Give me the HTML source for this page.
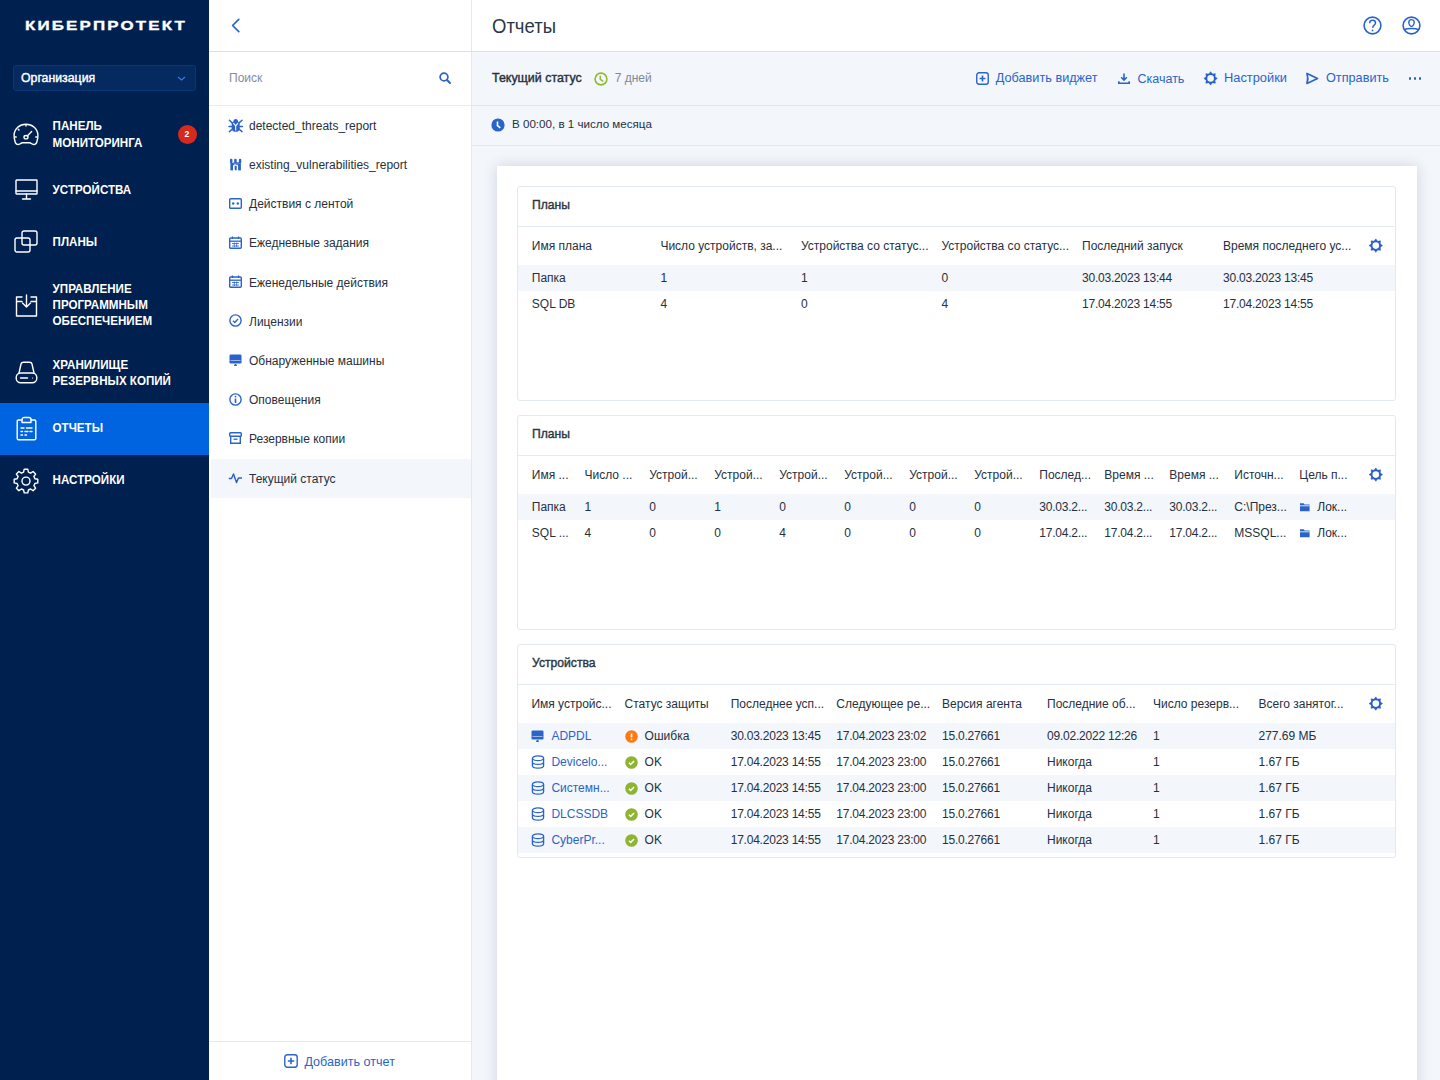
<!DOCTYPE html>
<html><head><meta charset="utf-8"><title>Отчеты</title>
<style>
html,body{margin:0;padding:0;}
body{width:1440px;height:1080px;overflow:hidden;position:relative;background:#F3F6FB;font-family:"Liberation Sans",sans-serif;}
.t{position:absolute;white-space:nowrap;line-height:1;}
svg{overflow:visible}
</style></head><body>

<div style="position:absolute;left:0px;top:0px;width:209px;height:1080px;background:#00204F"></div>
<div class="t" style="left:25px;top:19px;font-size:13px;font-weight:700;color:#fff;letter-spacing:1.66px;-webkit-text-stroke:0.35px #fff;transform-origin:0 0;transform:scaleX(1.3);">КИБЕРПРОТЕКТ</div>
<div style="position:absolute;left:13px;top:65px;width:183px;height:26px;box-sizing:border-box;background:#042A60;border:1px solid #0A3673;border-radius:3px"></div>
<div class="t" style="left:21px;top:72.19px;font-size:12.3px;font-weight:400;color:#FFFFFF;-webkit-text-stroke:0.4px #fff;transform-origin:0 10.41px;transform:scaleY(1.08);">Организация</div>
<svg style="position:absolute;left:177px;top:76px" width="9" height="6" viewBox="0 0 9 6"><path d="M1 1 L4.5 4 L8 1" fill="none" stroke="#3B78DA" stroke-width="1.3"/></svg>
<div style="position:absolute;left:0px;top:403px;width:209px;height:52px;background:#0064E0"></div>
<div class="t" style="left:52.6px;top:119.98px;font-size:11.6px;font-weight:700;color:#FFFFFF;transform-origin:0 9.82px;transform:scaleY(1.14);">ПАНЕЛЬ</div>
<div class="t" style="left:52.6px;top:137.08px;font-size:11.6px;font-weight:700;color:#FFFFFF;transform-origin:0 9.82px;transform:scaleY(1.14);">МОНИТОРИНГА</div>
<div class="t" style="left:52.6px;top:183.68px;font-size:11.6px;font-weight:700;color:#FFFFFF;transform-origin:0 9.82px;transform:scaleY(1.14);">УСТРОЙСТВА</div>
<div class="t" style="left:52.6px;top:236.38px;font-size:11.6px;font-weight:700;color:#FFFFFF;transform-origin:0 9.82px;transform:scaleY(1.14);">ПЛАНЫ</div>
<div class="t" style="left:52.6px;top:283.18px;font-size:11.6px;font-weight:700;color:#FFFFFF;transform-origin:0 9.82px;transform:scaleY(1.14);">УПРАВЛЕНИЕ</div>
<div class="t" style="left:52.6px;top:299.28px;font-size:11.6px;font-weight:700;color:#FFFFFF;transform-origin:0 9.82px;transform:scaleY(1.14);">ПРОГРАММНЫМ</div>
<div class="t" style="left:52.6px;top:315.38px;font-size:11.6px;font-weight:700;color:#FFFFFF;transform-origin:0 9.82px;transform:scaleY(1.14);">ОБЕСПЕЧЕНИЕМ</div>
<div class="t" style="left:52.6px;top:359.08px;font-size:11.6px;font-weight:700;color:#FFFFFF;transform-origin:0 9.82px;transform:scaleY(1.14);">ХРАНИЛИЩЕ</div>
<div class="t" style="left:52.6px;top:374.58px;font-size:11.6px;font-weight:700;color:#FFFFFF;transform-origin:0 9.82px;transform:scaleY(1.14);">РЕЗЕРВНЫХ КОПИЙ</div>
<div class="t" style="left:52.6px;top:421.68px;font-size:11.6px;font-weight:700;color:#FFFFFF;transform-origin:0 9.82px;transform:scaleY(1.14);">ОТЧЕТЫ</div>
<div class="t" style="left:52.6px;top:474.08px;font-size:11.6px;font-weight:700;color:#FFFFFF;transform-origin:0 9.82px;transform:scaleY(1.14);">НАСТРОЙКИ</div>
<svg style="position:absolute;left:13px;top:123px" width="26" height="23" viewBox="0 0 26 23"><path d="M5.5 21.5 C3.2 21.5 2.2 20 1.9 17.8 C1.2 15.8 1 13.8 1.1 12 C1.4 5.6 6.6 1.3 13 1.3 C19.4 1.3 24.6 5.6 24.9 12 C25 13.8 24.8 15.8 24.1 17.8 C23.8 20 22.8 21.5 20.5 21.5 C18.6 21.5 18.1 19.7 16.6 19.7 H9.4 C7.9 19.7 7.4 21.5 5.5 21.5 Z" fill="none" stroke="#FFFFFF" stroke-width="1.4" stroke-linecap="round" stroke-linejoin="round" stroke-width="1.7"/><path d="M13 1.8 V3 M2.2 14 H3.2 M23.8 14 H22.8 M5.2 6.2 L6 7" fill="none" stroke="#FFFFFF" stroke-width="1.4" stroke-linecap="round" stroke-linejoin="round" stroke-width="1.7"/><ellipse cx="13" cy="14.2" rx="2" ry="1.7" fill="none" stroke="#FFFFFF" stroke-width="1.4" stroke-linecap="round" stroke-linejoin="round" stroke-width="1.7"/><path d="M14.3 12.9 L18.6 8.6" fill="none" stroke="#FFFFFF" stroke-width="1.4" stroke-linecap="round" stroke-linejoin="round" stroke-width="1.6"/></svg>
<svg style="position:absolute;left:15px;top:179px" width="23" height="22" viewBox="0 0 23 22"><rect x="1" y="1" width="21" height="14" rx="0.5" fill="none" stroke="#FFFFFF" stroke-width="1.4" stroke-linecap="round" stroke-linejoin="round"/><path d="M1 12 H22 M11.5 15 V19.5 M7.5 20 H15.5" fill="none" stroke="#FFFFFF" stroke-width="1.4" stroke-linecap="round" stroke-linejoin="round"/></svg>
<svg style="position:absolute;left:14px;top:230px" width="24" height="24" viewBox="0 0 24 24"><rect x="8" y="1" width="15" height="14" rx="2" fill="none" stroke="#FFFFFF" stroke-width="1.4" stroke-linecap="round" stroke-linejoin="round" stroke="#D8DDE6"/><rect x="1" y="8" width="15" height="14" rx="2" fill="none" stroke="#FFFFFF" stroke-width="1.4" stroke-linecap="round" stroke-linejoin="round" stroke="#D8DDE6"/></svg>
<svg style="position:absolute;left:15px;top:294px" width="23" height="23" viewBox="0 0 23 23"><path d="M7 3 H1.5 V22 H21.5 V3 H16 M1.5 7.5 H7 M16 7.5 H21.5" fill="none" stroke="#FFFFFF" stroke-width="1.4" stroke-linecap="round" stroke-linejoin="round"/><path d="M11.5 1 V13 M7.5 9 L11.5 13 L15.5 9" fill="none" stroke="#FFFFFF" stroke-width="1.4" stroke-linecap="round" stroke-linejoin="round"/></svg>
<svg style="position:absolute;left:15px;top:361px" width="23" height="23" viewBox="0 0 23 23"><path d="M4 12 L6 3 C6.3 1.8 7 1.2 8.5 1.2 H14.5 C16 1.2 16.7 1.8 17 3 L19 12" fill="none" stroke="#FFFFFF" stroke-width="1.4" stroke-linecap="round" stroke-linejoin="round"/><rect x="1.2" y="12" width="20.6" height="9.8" rx="4.5" fill="none" stroke="#FFFFFF" stroke-width="1.4" stroke-linecap="round" stroke-linejoin="round"/><path d="M5.5 17 H12.5" fill="none" stroke="#FFFFFF" stroke-width="1.4" stroke-linecap="round" stroke-linejoin="round"/><circle cx="17.5" cy="17" r="0.6" fill="#fff"/></svg>
<svg style="position:absolute;left:16px;top:416px" width="21" height="25" viewBox="0 0 21 25"><path d="M6 4 H2.5 C1.7 4 1.2 4.5 1.2 5.3 V22.5 C1.2 23.3 1.7 23.8 2.5 23.8 H18.5 C19.3 23.8 19.8 23.3 19.8 22.5 V5.3 C19.8 4.5 19.3 4 18.5 4 H15" fill="none" stroke="#FFFFFF" stroke-width="1.4" stroke-linecap="round" stroke-linejoin="round"/><path d="M6 6.5 V3.5 C6 2.5 7 1.5 8 1.5 H13 C14 1.5 15 2.5 15 3.5 V6.5 Z" fill="none" stroke="#FFFFFF" stroke-width="1.4" stroke-linecap="round" stroke-linejoin="round"/><path d="M5 12 H8 M10.5 12 H16 M5 15.5 H6.5 M9 15.5 H12 M14 15.5 H16 M5 19 H6.5 M9 19 H10.5" fill="none" stroke="#FFFFFF" stroke-width="1.4" stroke-linecap="round" stroke-linejoin="round"/></svg>
<svg style="position:absolute;left:14px;top:468px" width="24" height="26" viewBox="0 0 24 26"><path d="M10.2 1.2 H13.8 L14.4 4.2 L16.6 5.2 L19.1 3.5 L21.6 6 L19.9 8.5 L20.9 10.7 L23.8 11.3 V14.9 L20.9 15.5 L19.9 17.7 L21.6 20.2 L19.1 22.7 L16.6 21 L14.4 22 L13.8 24.9 H10.2 L9.6 22 L7.4 21 L4.9 22.7 L2.4 20.2 L4.1 17.7 L3.1 15.5 L0.2 14.9 V11.3 L3.1 10.7 L4.1 8.5 L2.4 6 L4.9 3.5 L7.4 5.2 L9.6 4.2 Z" fill="none" stroke="#FFFFFF" stroke-width="1.4" stroke-linecap="round" stroke-linejoin="round"/><circle cx="12" cy="13.1" r="4" fill="none" stroke="#FFFFFF" stroke-width="1.4" stroke-linecap="round" stroke-linejoin="round"/></svg>
<div style="position:absolute;left:177.5px;top:124.5px;width:19px;height:19px;border-radius:50%;background:#D8291F;color:#fff;font-size:8.6px;font-weight:700;line-height:19px;text-align:center">2</div>
<div style="position:absolute;left:209px;top:0px;width:262px;height:1080px;background:#FFFFFF"></div>
<div style="position:absolute;left:471px;top:0px;width:1px;height:1080px;background:#E2E9F6"></div>
<div style="position:absolute;left:209px;top:51px;width:1231px;height:1px;background:#D6E0F2"></div>
<svg style="position:absolute;left:231px;top:18px" width="9" height="15" viewBox="0 0 9 15"><path d="M7.8 1.3 L1.6 7.5 L7.8 13.7" fill="none" stroke="#2B64C8" stroke-width="1.7" stroke-linecap="round" stroke-linejoin="round"/></svg>
<div class="t" style="left:229px;top:71.74px;font-size:12px;font-weight:400;color:#838C9C;">Поиск</div>
<svg style="position:absolute;left:439px;top:72px" width="13" height="14" viewBox="0 0 13 14"><circle cx="5" cy="5" r="3.9" fill="none" stroke="#2B64C8" stroke-width="1.7"/><path d="M8 8 L11 11" stroke="#2B64C8" stroke-width="1.9" stroke-linecap="round"/></svg>
<div style="position:absolute;left:209px;top:105px;width:262px;height:1px;background:#E6ECF7"></div>
<div style="position:absolute;left:211px;top:459px;width:260px;height:39px;background:#F3F6FB"></div>
<div class="t" style="left:249px;top:119.84px;font-size:12px;font-weight:400;color:#26303E;">detected_threats_report</div>
<div class="t" style="left:249px;top:159.03px;font-size:12px;font-weight:400;color:#26303E;">existing_vulnerabilities_report</div>
<div class="t" style="left:249px;top:198.22px;font-size:12px;font-weight:400;color:#26303E;">Действия с лентой</div>
<div class="t" style="left:249px;top:237.41px;font-size:12px;font-weight:400;color:#26303E;">Ежедневные задания</div>
<div class="t" style="left:249px;top:276.60px;font-size:12px;font-weight:400;color:#26303E;">Еженедельные действия</div>
<div class="t" style="left:249px;top:315.79px;font-size:12px;font-weight:400;color:#26303E;">Лицензии</div>
<div class="t" style="left:249px;top:354.98px;font-size:12px;font-weight:400;color:#26303E;">Обнаруженные машины</div>
<div class="t" style="left:249px;top:394.17px;font-size:12px;font-weight:400;color:#26303E;">Оповещения</div>
<div class="t" style="left:249px;top:433.36px;font-size:12px;font-weight:400;color:#26303E;">Резервные копии</div>
<div class="t" style="left:249px;top:472.55px;font-size:12px;font-weight:400;color:#26303E;">Текущий статус</div>
<svg style="position:absolute;left:226px;top:116px" width="20" height="20" viewBox="0 0 20 20"><path d="M7 7.5 C7 4.6 8.3 3.1 9.7 3.1 C11.1 3.1 12.4 4.6 12.4 7.5 Z" fill="#2B64C8"/><path d="M5.7 6.6 H13.7 V12.4 C13.7 14.5 12 15.8 9.7 15.8 C7.4 15.8 5.7 14.5 5.7 12.4 Z" fill="#2B64C8"/><path d="M7.4 7.2 L9.7 9.8 L12 7.2 M9.7 9.8 V14.6" fill="none" stroke="#fff" stroke-width="1.1"/><path d="M3.4 4.3 L6.3 6.9 M16 4.3 L13.1 6.9 M3 10.4 H5.9 M16.4 10.4 H13.5 M3.4 15.6 L6.2 13.2 M16 15.6 L13.2 13.2" stroke="#2B64C8" stroke-width="1.5" stroke-linecap="round"/></svg>
<svg style="position:absolute;left:226px;top:155px" width="20" height="20" viewBox="0 0 20 20"><rect x="4" y="3.7" width="2.4" height="4.6" rx="1.1" fill="#2B64C8"/><rect x="8.2" y="3.7" width="2.5" height="4.6" rx="1.1" fill="#2B64C8"/><rect x="12.9" y="3.7" width="2.4" height="4.6" rx="1.1" fill="#2B64C8"/><path d="M4.6 7.2 H14.8 V9.2 C13.5 9.2 12.6 9.6 12.4 10.5 V15.2 H14.6 V8.5 M4.6 7.2 V15.2 H6.9 V10.5 C7.2 9.5 8.3 8.9 9.7 8.9 C11.1 8.9 12.2 9.5 12.4 10.5" fill="#2B64C8"/><path d="M4.6 8.3 H14.8 V15.2 H12.3 V11 C12.3 9.8 11.2 9 9.7 9 C8.2 9 7 9.8 7 11 V15.2 H4.6 Z" fill="#2B64C8"/><rect x="8.7" y="10.8" width="2" height="4.4" fill="#2B64C8"/></svg>
<svg style="position:absolute;left:229px;top:198px" width="13" height="11" viewBox="0 0 13 11"><rect x="0.7" y="0.7" width="11.6" height="9.6" rx="1" fill="none" stroke="#2B64C8" stroke-width="1.4"/><circle cx="4.2" cy="5.5" r="1.2" fill="#2B64C8"/><circle cx="8.8" cy="5.5" r="1.2" fill="#2B64C8"/></svg>
<svg style="position:absolute;left:229px;top:236px" width="13" height="13" viewBox="0 0 13 13"><rect x="0.7" y="2" width="11.6" height="10.3" rx="1" fill="none" stroke="#2B64C8" stroke-width="1.4"/><path d="M0.7 5.2 H12.3" stroke="#2B64C8" stroke-width="1.3"/><path d="M3.5 0.5 V3 M9.5 0.5 V3" stroke="#2B64C8" stroke-width="1.3"/><path d="M3 7.5 H10 M3 10 H10 M5.3 6.5 V11 M7.7 6.5 V11" stroke="#2B64C8" stroke-width="0.8"/></svg>
<svg style="position:absolute;left:229px;top:275px" width="13" height="13" viewBox="0 0 13 13"><rect x="0.7" y="2" width="11.6" height="10.3" rx="1" fill="none" stroke="#2B64C8" stroke-width="1.4"/><path d="M0.7 5.2 H12.3" stroke="#2B64C8" stroke-width="1.3"/><path d="M3.5 0.5 V3 M9.5 0.5 V3" stroke="#2B64C8" stroke-width="1.3"/><path d="M3 7.5 H10 M3 10 H10 M5.3 6.5 V11 M7.7 6.5 V11" stroke="#2B64C8" stroke-width="0.8"/></svg>
<svg style="position:absolute;left:229px;top:314px" width="13" height="13" viewBox="0 0 13 13"><circle cx="6.5" cy="6.5" r="5.6" fill="none" stroke="#2B64C8" stroke-width="1.4"/><path d="M4 6.7 L5.8 8.4 L9 5" fill="none" stroke="#2B64C8" stroke-width="1.4"/></svg>
<svg style="position:absolute;left:229px;top:354px" width="13" height="13" viewBox="0 0 13 13"><rect x="0.5" y="0.5" width="12" height="9" rx="1.3" fill="#2B64C8"/><path d="M1.5 6.5 H11.5" stroke="#9DB5E6" stroke-width="1"/><path d="M5 12 H8 L7.3 10 H5.7 Z" fill="#2B64C8"/></svg>
<svg style="position:absolute;left:229px;top:393px" width="13" height="13" viewBox="0 0 13 13"><circle cx="6.5" cy="6.5" r="5.6" fill="none" stroke="#2B64C8" stroke-width="1.4"/><path d="M6.5 5.5 V10" stroke="#2B64C8" stroke-width="1.6"/><circle cx="6.5" cy="3.6" r="0.9" fill="#2B64C8"/></svg>
<svg style="position:absolute;left:229px;top:432px" width="13" height="12" viewBox="0 0 13 12"><rect x="0.7" y="0.7" width="11.6" height="3.5" rx="0.8" fill="none" stroke="#2B64C8" stroke-width="1.4"/><path d="M1.7 4.2 V11.3 H11.3 V4.2" fill="none" stroke="#2B64C8" stroke-width="1.4"/><path d="M4.5 7.2 H8.5" stroke="#2B64C8" stroke-width="1.3"/></svg>
<svg style="position:absolute;left:228px;top:472px" width="15" height="12" viewBox="0 0 15 12"><path d="M0.8 6.5 H3.5 L5.5 2 L8.5 10.5 L10.5 6 H14" fill="none" stroke="#2B64C8" stroke-width="1.5" stroke-linejoin="round"/></svg>
<div style="position:absolute;left:209px;top:1041px;width:262px;height:1px;background:#E2E9F4"></div>
<svg style="position:absolute;left:284px;top:1054px" width="14" height="14" viewBox="0 0 14 14"><rect x="0.8" y="0.8" width="12.4" height="12.4" rx="2.5" fill="none" stroke="#2B64C8" stroke-width="1.4"/><path d="M7 3.8 V10.2 M3.8 7 H10.2" stroke="#2B64C8" stroke-width="1.6"/></svg>
<div class="t" style="left:304.4px;top:1056.23px;font-size:12.6px;font-weight:400;color:#2B64C8;">Добавить отчет</div>
<div style="position:absolute;left:472px;top:0px;width:968px;height:51px;background:#FFFFFF"></div>
<div class="t" style="left:492px;top:18.24px;font-size:18.5px;font-weight:400;color:#2B3748;transform-origin:0 15.66px;transform:scaleY(1.07);">Отчеты</div>
<svg style="position:absolute;left:1363px;top:16px" width="19" height="19" viewBox="0 0 19 19"><circle cx="9.5" cy="9.5" r="8.4" fill="none" stroke="#2B64C8" stroke-width="1.6"/><path d="M6.6 7.2 C6.6 5.3 8 4.3 9.6 4.3 C11.3 4.3 12.5 5.4 12.5 6.9 C12.5 8.8 10 9.3 9.6 11.8" fill="none" stroke="#2B64C8" stroke-width="1.5"/><circle cx="9.5" cy="14.4" r="0.9" fill="#2B64C8"/></svg>
<svg style="position:absolute;left:1402px;top:16px" width="19" height="19" viewBox="0 0 19 19"><circle cx="9.5" cy="9.5" r="8.4" fill="none" stroke="#2B64C8" stroke-width="1.6"/><path d="M9.5 3.6 C7.8 3.6 6.8 4.8 6.8 6.4 C6.8 8.3 8.3 10.4 9.5 10.4 C10.7 10.4 12.2 8.3 12.2 6.4 C12.2 4.8 11.2 3.6 9.5 3.6 Z" fill="none" stroke="#2B64C8" stroke-width="1.4"/><path d="M2.5 13.6 C5 12.2 14 12.2 16.5 13.6" fill="none" stroke="#2B64C8" stroke-width="1.6"/></svg>
<div class="t" style="left:492px;top:72.26px;font-size:12.45px;font-weight:400;color:#26303E;-webkit-text-stroke:0.4px #26303E;">Текущий статус</div>
<svg style="position:absolute;left:594px;top:72px" width="14" height="14" viewBox="0 0 14 14"><circle cx="7" cy="7" r="5.9" fill="none" stroke="#93B833" stroke-width="1.6"/><path d="M6.3 3.8 V7.3 L9.3 9.5" fill="none" stroke="#93B833" stroke-width="1.5"/></svg>
<div class="t" style="left:614.7px;top:72.14px;font-size:12px;font-weight:400;color:#7F8898;">7 дней</div>
<svg style="position:absolute;left:976px;top:72px" width="13" height="13" viewBox="0 0 13 13"><rect x="0.75" y="0.75" width="11.5" height="11.5" rx="2.3" fill="none" stroke="#2B64C8" stroke-width="1.4"/><path d="M6.5 3.6 V9.4 M3.6 6.5 H9.4" stroke="#2B64C8" stroke-width="1.6"/></svg>
<div class="t" style="left:995.8px;top:72.35px;font-size:12.7px;font-weight:400;color:#2B64C8;">Добавить виджет</div>
<svg style="position:absolute;left:1118px;top:73px" width="12" height="11" viewBox="0 0 12 11"><path d="M6 0.5 V7 M3.2 4.3 L6 7.2 L8.8 4.3" fill="none" stroke="#2B64C8" stroke-width="1.6"/><path d="M0.8 8.3 V10.2 H11.2 V8.3" fill="none" stroke="#2B64C8" stroke-width="1.6"/></svg>
<div class="t" style="left:1137.5px;top:72.52px;font-size:12.5px;font-weight:400;color:#2B64C8;">Скачать</div>
<svg style="position:absolute;left:0;top:0" width="1440" height="1080" viewBox="0 0 1440 1080" class="ov"><polygon points="1210.60,71.70 1212.36,74.15 1215.34,73.66 1214.85,76.64 1217.30,78.40 1214.85,80.16 1215.34,83.14 1212.36,82.65 1210.60,85.10 1208.84,82.65 1205.86,83.14 1206.35,80.16 1203.90,78.40 1206.35,76.64 1205.86,73.66 1208.84,74.15" fill="#2A5FC6" stroke="#2A5FC6" stroke-width="0.6" stroke-linejoin="round"/><circle cx="1210.6" cy="78.4" r="4.9" fill="#2A5FC6"/><circle cx="1210.6" cy="78.4" r="3.3" fill="#F3F6FB"/></svg>
<div class="t" style="left:1224px;top:72.22px;font-size:12.85px;font-weight:400;color:#2B64C8;">Настройки</div>
<svg style="position:absolute;left:1305px;top:72px" width="14" height="13" viewBox="0 0 14 13"><path d="M2 1.4 L12.5 6.4 L2 11.4 Q3.6 6.4 2 1.4 Z" fill="none" stroke="#2B64C8" stroke-width="1.7" stroke-linejoin="round"/></svg>
<div class="t" style="left:1326px;top:72.35px;font-size:12.7px;font-weight:400;color:#2B64C8;">Отправить</div>
<div style="position:absolute;left:1408.7px;top:77.3px;width:2.6px;height:2.6px;border-radius:50%;background:#2B64C8"></div>
<div style="position:absolute;left:1413.7px;top:77.3px;width:2.6px;height:2.6px;border-radius:50%;background:#2B64C8"></div>
<div style="position:absolute;left:1418.7px;top:77.3px;width:2.6px;height:2.6px;border-radius:50%;background:#2B64C8"></div>
<div style="position:absolute;left:472px;top:105px;width:968px;height:1px;background:#DFE6F3"></div>
<svg style="position:absolute;left:491px;top:118px" width="14" height="14" viewBox="0 0 14 14"><circle cx="7" cy="7" r="6.6" fill="#2B64C8"/><path d="M6.5 3.5 V7.5 L9.3 9.8" fill="none" stroke="#fff" stroke-width="1.6"/></svg>
<div class="t" style="left:512px;top:117.68px;font-size:11.6px;font-weight:400;color:#26303E;">В 00:00, в 1 число месяца</div>
<div style="position:absolute;left:472px;top:145px;width:968px;height:1px;background:#E1E8F4"></div>
<div style="position:absolute;left:497px;top:166px;width:920px;height:960px;background:#fff;box-shadow:0 0 13px rgba(30,40,70,0.17)"></div>
<div style="position:absolute;left:517px;top:186px;width:879px;height:215px;box-sizing:border-box;border:1px solid #E2E9F4;border-radius:3px;background:#fff"></div>
<div class="t" style="left:532px;top:199.42px;font-size:12.15px;font-weight:400;color:#2C3644;-webkit-text-stroke:0.4px #2C3644;transform-origin:0 10.28px;transform:scaleY(1.08);">Планы</div>
<div style="position:absolute;left:518px;top:226px;width:877px;height:1px;background:#E2E9F4"></div>
<div class="t" style="left:531.8px;top:239.94px;font-size:12px;font-weight:400;color:#26303E;">Имя плана</div>
<div class="t" style="left:660.4px;top:239.94px;font-size:12px;font-weight:400;color:#26303E;">Число устройств, за...</div>
<div class="t" style="left:801px;top:239.94px;font-size:12px;font-weight:400;color:#26303E;">Устройства со статус...</div>
<div class="t" style="left:941.5px;top:239.94px;font-size:12px;font-weight:400;color:#26303E;">Устройства со статус...</div>
<div class="t" style="left:1082px;top:239.94px;font-size:12px;font-weight:400;color:#26303E;">Последний запуск</div>
<div class="t" style="left:1223px;top:239.94px;font-size:12px;font-weight:400;color:#26303E;">Время последнего ус...</div>
<svg style="position:absolute;left:0;top:0" width="1440" height="1080" viewBox="0 0 1440 1080" class="ov"><polygon points="1375.80,238.90 1377.56,241.35 1380.54,240.86 1380.05,243.84 1382.50,245.60 1380.05,247.36 1380.54,250.34 1377.56,249.85 1375.80,252.30 1374.04,249.85 1371.06,250.34 1371.55,247.36 1369.10,245.60 1371.55,243.84 1371.06,240.86 1374.04,241.35" fill="#2A5FC6" stroke="#2A5FC6" stroke-width="0.6" stroke-linejoin="round"/><circle cx="1375.8" cy="245.6" r="4.9" fill="#2A5FC6"/><circle cx="1375.8" cy="245.6" r="3.3" fill="#FFFFFF"/></svg>
<div style="position:absolute;left:518px;top:265px;width:877px;height:26px;background:#F3F6FB"></div>
<div class="t" style="left:531.8px;top:272.24px;font-size:12px;font-weight:400;color:#26303E;">Папка</div>
<div class="t" style="left:660.4px;top:272.24px;font-size:12px;font-weight:400;color:#26303E;">1</div>
<div class="t" style="left:801px;top:272.24px;font-size:12px;font-weight:400;color:#26303E;">1</div>
<div class="t" style="left:941.5px;top:272.24px;font-size:12px;font-weight:400;color:#26303E;">0</div>
<div class="t" style="left:1082px;top:272.24px;font-size:12px;font-weight:400;color:#26303E;letter-spacing:-0.22px;">30.03.2023 13:44</div>
<div class="t" style="left:1223px;top:272.24px;font-size:12px;font-weight:400;color:#26303E;letter-spacing:-0.22px;">30.03.2023 13:45</div>
<div class="t" style="left:531.8px;top:298.24px;font-size:12px;font-weight:400;color:#26303E;">SQL DB</div>
<div class="t" style="left:660.4px;top:298.24px;font-size:12px;font-weight:400;color:#26303E;">4</div>
<div class="t" style="left:801px;top:298.24px;font-size:12px;font-weight:400;color:#26303E;">0</div>
<div class="t" style="left:941.5px;top:298.24px;font-size:12px;font-weight:400;color:#26303E;">4</div>
<div class="t" style="left:1082px;top:298.24px;font-size:12px;font-weight:400;color:#26303E;letter-spacing:-0.22px;">17.04.2023 14:55</div>
<div class="t" style="left:1223px;top:298.24px;font-size:12px;font-weight:400;color:#26303E;letter-spacing:-0.22px;">17.04.2023 14:55</div>
<div style="position:absolute;left:517px;top:415px;width:879px;height:215px;box-sizing:border-box;border:1px solid #E2E9F4;border-radius:3px;background:#fff"></div>
<div class="t" style="left:532px;top:428.42px;font-size:12.15px;font-weight:400;color:#2C3644;-webkit-text-stroke:0.4px #2C3644;transform-origin:0 10.28px;transform:scaleY(1.08);">Планы</div>
<div style="position:absolute;left:518px;top:455px;width:877px;height:1px;background:#E2E9F4"></div>
<div class="t" style="left:531.8px;top:468.94px;font-size:12px;font-weight:400;color:#26303E;">Имя ...</div>
<div class="t" style="left:584.5px;top:468.94px;font-size:12px;font-weight:400;color:#26303E;">Число ...</div>
<div class="t" style="left:649.3px;top:468.94px;font-size:12px;font-weight:400;color:#26303E;">Устрой...</div>
<div class="t" style="left:714.3px;top:468.94px;font-size:12px;font-weight:400;color:#26303E;">Устрой...</div>
<div class="t" style="left:779.3px;top:468.94px;font-size:12px;font-weight:400;color:#26303E;">Устрой...</div>
<div class="t" style="left:844.3px;top:468.94px;font-size:12px;font-weight:400;color:#26303E;">Устрой...</div>
<div class="t" style="left:909.3px;top:468.94px;font-size:12px;font-weight:400;color:#26303E;">Устрой...</div>
<div class="t" style="left:974.3px;top:468.94px;font-size:12px;font-weight:400;color:#26303E;">Устрой...</div>
<div class="t" style="left:1039.3px;top:468.94px;font-size:12px;font-weight:400;color:#26303E;">Послед...</div>
<div class="t" style="left:1104.3px;top:468.94px;font-size:12px;font-weight:400;color:#26303E;">Время ...</div>
<div class="t" style="left:1169.3px;top:468.94px;font-size:12px;font-weight:400;color:#26303E;">Время ...</div>
<div class="t" style="left:1234.3px;top:468.94px;font-size:12px;font-weight:400;color:#26303E;">Источн...</div>
<div class="t" style="left:1299.3px;top:468.94px;font-size:12px;font-weight:400;color:#26303E;">Цель п...</div>
<svg style="position:absolute;left:0;top:0" width="1440" height="1080" viewBox="0 0 1440 1080" class="ov"><polygon points="1375.80,467.90 1377.56,470.35 1380.54,469.86 1380.05,472.84 1382.50,474.60 1380.05,476.36 1380.54,479.34 1377.56,478.85 1375.80,481.30 1374.04,478.85 1371.06,479.34 1371.55,476.36 1369.10,474.60 1371.55,472.84 1371.06,469.86 1374.04,470.35" fill="#2A5FC6" stroke="#2A5FC6" stroke-width="0.6" stroke-linejoin="round"/><circle cx="1375.8" cy="474.6" r="4.9" fill="#2A5FC6"/><circle cx="1375.8" cy="474.6" r="3.3" fill="#FFFFFF"/></svg>
<div style="position:absolute;left:518px;top:494px;width:877px;height:26px;background:#F3F6FB"></div>
<div class="t" style="left:531.8px;top:501.24px;font-size:12px;font-weight:400;color:#26303E;">Папка</div>
<div class="t" style="left:584.5px;top:501.24px;font-size:12px;font-weight:400;color:#26303E;">1</div>
<div class="t" style="left:649.3px;top:501.24px;font-size:12px;font-weight:400;color:#26303E;">0</div>
<div class="t" style="left:714.3px;top:501.24px;font-size:12px;font-weight:400;color:#26303E;">1</div>
<div class="t" style="left:779.3px;top:501.24px;font-size:12px;font-weight:400;color:#26303E;">0</div>
<div class="t" style="left:844.3px;top:501.24px;font-size:12px;font-weight:400;color:#26303E;">0</div>
<div class="t" style="left:909.3px;top:501.24px;font-size:12px;font-weight:400;color:#26303E;">0</div>
<div class="t" style="left:974.3px;top:501.24px;font-size:12px;font-weight:400;color:#26303E;">0</div>
<div class="t" style="left:1039.3px;top:501.24px;font-size:12px;font-weight:400;color:#26303E;letter-spacing:-0.22px;">30.03.2...</div>
<div class="t" style="left:1104.3px;top:501.24px;font-size:12px;font-weight:400;color:#26303E;letter-spacing:-0.22px;">30.03.2...</div>
<div class="t" style="left:1169.3px;top:501.24px;font-size:12px;font-weight:400;color:#26303E;letter-spacing:-0.22px;">30.03.2...</div>
<div class="t" style="left:1234.3px;top:501.24px;font-size:12px;font-weight:400;color:#26303E;">C:\През...</div>
<svg style="position:absolute;left:1300.0px;top:503px" width="10" height="9" viewBox="0 0 10 9"><path d="M0 0.3 H3.6 L4.6 1.5 H9.6 V8.3 H0 Z" fill="#2B64C8"/><path d="M0 2.8 H9.6" stroke="#fff" stroke-width="0.8"/></svg>
<div class="t" style="left:1317.3px;top:501.24px;font-size:12px;font-weight:400;color:#26303E;">Лок...</div>
<div class="t" style="left:531.8px;top:527.24px;font-size:12px;font-weight:400;color:#26303E;">SQL ...</div>
<div class="t" style="left:584.5px;top:527.24px;font-size:12px;font-weight:400;color:#26303E;">4</div>
<div class="t" style="left:649.3px;top:527.24px;font-size:12px;font-weight:400;color:#26303E;">0</div>
<div class="t" style="left:714.3px;top:527.24px;font-size:12px;font-weight:400;color:#26303E;">0</div>
<div class="t" style="left:779.3px;top:527.24px;font-size:12px;font-weight:400;color:#26303E;">4</div>
<div class="t" style="left:844.3px;top:527.24px;font-size:12px;font-weight:400;color:#26303E;">0</div>
<div class="t" style="left:909.3px;top:527.24px;font-size:12px;font-weight:400;color:#26303E;">0</div>
<div class="t" style="left:974.3px;top:527.24px;font-size:12px;font-weight:400;color:#26303E;">0</div>
<div class="t" style="left:1039.3px;top:527.24px;font-size:12px;font-weight:400;color:#26303E;letter-spacing:-0.22px;">17.04.2...</div>
<div class="t" style="left:1104.3px;top:527.24px;font-size:12px;font-weight:400;color:#26303E;letter-spacing:-0.22px;">17.04.2...</div>
<div class="t" style="left:1169.3px;top:527.24px;font-size:12px;font-weight:400;color:#26303E;letter-spacing:-0.22px;">17.04.2...</div>
<div class="t" style="left:1234.3px;top:527.24px;font-size:12px;font-weight:400;color:#26303E;">MSSQL...</div>
<svg style="position:absolute;left:1300.0px;top:529px" width="10" height="9" viewBox="0 0 10 9"><path d="M0 0.3 H3.6 L4.6 1.5 H9.6 V8.3 H0 Z" fill="#2B64C8"/><path d="M0 2.8 H9.6" stroke="#fff" stroke-width="0.8"/></svg>
<div class="t" style="left:1317.3px;top:527.24px;font-size:12px;font-weight:400;color:#26303E;">Лок...</div>
<div style="position:absolute;left:517px;top:644px;width:879px;height:214px;box-sizing:border-box;border:1px solid #E2E9F4;border-radius:3px;background:#fff"></div>
<div class="t" style="left:532px;top:657.42px;font-size:12.15px;font-weight:400;color:#2C3644;-webkit-text-stroke:0.4px #2C3644;transform-origin:0 10.28px;transform:scaleY(1.08);">Устройства</div>
<div style="position:absolute;left:518px;top:684px;width:877px;height:1px;background:#E2E9F4"></div>
<div class="t" style="left:531.4px;top:697.94px;font-size:12px;font-weight:400;color:#26303E;">Имя устройс...</div>
<div class="t" style="left:624.6px;top:697.94px;font-size:12px;font-weight:400;color:#26303E;">Статус защиты</div>
<div class="t" style="left:730.7px;top:697.94px;font-size:12px;font-weight:400;color:#26303E;">Последнее усп...</div>
<div class="t" style="left:836.3px;top:697.94px;font-size:12px;font-weight:400;color:#26303E;">Следующее ре...</div>
<div class="t" style="left:942px;top:697.94px;font-size:12px;font-weight:400;color:#26303E;">Версия агента</div>
<div class="t" style="left:1047px;top:697.94px;font-size:12px;font-weight:400;color:#26303E;">Последние об...</div>
<div class="t" style="left:1153px;top:697.94px;font-size:12px;font-weight:400;color:#26303E;">Число резерв...</div>
<div class="t" style="left:1258.5px;top:697.94px;font-size:12px;font-weight:400;color:#26303E;">Всего занятог...</div>
<svg style="position:absolute;left:0;top:0" width="1440" height="1080" viewBox="0 0 1440 1080" class="ov"><polygon points="1375.80,696.90 1377.56,699.35 1380.54,698.86 1380.05,701.84 1382.50,703.60 1380.05,705.36 1380.54,708.34 1377.56,707.85 1375.80,710.30 1374.04,707.85 1371.06,708.34 1371.55,705.36 1369.10,703.60 1371.55,701.84 1371.06,698.86 1374.04,699.35" fill="#2A5FC6" stroke="#2A5FC6" stroke-width="0.6" stroke-linejoin="round"/><circle cx="1375.8" cy="703.6" r="4.9" fill="#2A5FC6"/><circle cx="1375.8" cy="703.6" r="3.3" fill="#FFFFFF"/></svg>
<div style="position:absolute;left:518px;top:723px;width:877px;height:26px;background:#F3F6FB"></div>
<svg style="position:absolute;left:531.4px;top:730px" width="13" height="13" viewBox="0 0 13 13"><rect x="0.5" y="0.5" width="12" height="9" rx="1.3" fill="#2B64C8"/><path d="M1.5 6.5 H11.5" stroke="#9DB5E6" stroke-width="1"/><path d="M5 12 H8 L7.3 10 H5.7 Z" fill="#2B64C8"/></svg>
<div class="t" style="left:551.4px;top:730.24px;font-size:12px;font-weight:400;color:#2B64C8;">ADPDL</div>
<svg style="position:absolute;left:624.6px;top:729.6px" width="13" height="13" viewBox="0 0 13 13"><circle cx="6.5" cy="6.5" r="6.3" fill="#FF7A12"/><path d="M6.5 3.6 V7.3" stroke="#fff" stroke-width="1.6"/><circle cx="6.5" cy="9.4" r="0.85" fill="#fff"/></svg>
<div class="t" style="left:644.6px;top:730.24px;font-size:12px;font-weight:400;color:#26303E;">Ошибка</div>
<div class="t" style="left:730.7px;top:730.24px;font-size:12px;font-weight:400;color:#26303E;letter-spacing:-0.22px;">30.03.2023 13:45</div>
<div class="t" style="left:836.3px;top:730.24px;font-size:12px;font-weight:400;color:#26303E;letter-spacing:-0.22px;">17.04.2023 23:02</div>
<div class="t" style="left:942px;top:730.24px;font-size:12px;font-weight:400;color:#26303E;letter-spacing:-0.22px;">15.0.27661</div>
<div class="t" style="left:1047px;top:730.24px;font-size:12px;font-weight:400;color:#26303E;letter-spacing:-0.22px;">09.02.2022 12:26</div>
<div class="t" style="left:1153px;top:730.24px;font-size:12px;font-weight:400;color:#26303E;">1</div>
<div class="t" style="left:1258.5px;top:730.24px;font-size:12px;font-weight:400;color:#26303E;">277.69 МБ</div>
<svg style="position:absolute;left:531.4px;top:755px" width="14" height="14" viewBox="0 0 14 14"><ellipse cx="7" cy="3.3" rx="5.6" ry="2.4" fill="none" stroke="#2B64C8" stroke-width="1.3"/><path d="M1.4 3.3 V10.7 C1.4 12 4 13.1 7 13.1 C10 13.1 12.6 12 12.6 10.7 V3.3 M1.4 7 C1.4 8.3 4 9.4 7 9.4 C10 9.4 12.6 8.3 12.6 7" fill="none" stroke="#2B64C8" stroke-width="1.3"/></svg>
<div class="t" style="left:551.4px;top:756.24px;font-size:12px;font-weight:400;color:#2B64C8;">Devicelo...</div>
<svg style="position:absolute;left:624.6px;top:755.6px" width="13" height="13" viewBox="0 0 13 13"><circle cx="6.5" cy="6.5" r="6.3" fill="#8DB52F"/><path d="M3.9 6.7 L5.7 8.4 L9.1 5" fill="none" stroke="#fff" stroke-width="1.5"/></svg>
<div class="t" style="left:644.6px;top:756.24px;font-size:12px;font-weight:400;color:#26303E;">OK</div>
<div class="t" style="left:730.7px;top:756.24px;font-size:12px;font-weight:400;color:#26303E;letter-spacing:-0.22px;">17.04.2023 14:55</div>
<div class="t" style="left:836.3px;top:756.24px;font-size:12px;font-weight:400;color:#26303E;letter-spacing:-0.22px;">17.04.2023 23:00</div>
<div class="t" style="left:942px;top:756.24px;font-size:12px;font-weight:400;color:#26303E;letter-spacing:-0.22px;">15.0.27661</div>
<div class="t" style="left:1047px;top:756.24px;font-size:12px;font-weight:400;color:#26303E;">Никогда</div>
<div class="t" style="left:1153px;top:756.24px;font-size:12px;font-weight:400;color:#26303E;">1</div>
<div class="t" style="left:1258.5px;top:756.24px;font-size:12px;font-weight:400;color:#26303E;">1.67 ГБ</div>
<div style="position:absolute;left:518px;top:775px;width:877px;height:26px;background:#F3F6FB"></div>
<svg style="position:absolute;left:531.4px;top:781px" width="14" height="14" viewBox="0 0 14 14"><ellipse cx="7" cy="3.3" rx="5.6" ry="2.4" fill="none" stroke="#2B64C8" stroke-width="1.3"/><path d="M1.4 3.3 V10.7 C1.4 12 4 13.1 7 13.1 C10 13.1 12.6 12 12.6 10.7 V3.3 M1.4 7 C1.4 8.3 4 9.4 7 9.4 C10 9.4 12.6 8.3 12.6 7" fill="none" stroke="#2B64C8" stroke-width="1.3"/></svg>
<div class="t" style="left:551.4px;top:782.24px;font-size:12px;font-weight:400;color:#2B64C8;">Системн...</div>
<svg style="position:absolute;left:624.6px;top:781.6px" width="13" height="13" viewBox="0 0 13 13"><circle cx="6.5" cy="6.5" r="6.3" fill="#8DB52F"/><path d="M3.9 6.7 L5.7 8.4 L9.1 5" fill="none" stroke="#fff" stroke-width="1.5"/></svg>
<div class="t" style="left:644.6px;top:782.24px;font-size:12px;font-weight:400;color:#26303E;">OK</div>
<div class="t" style="left:730.7px;top:782.24px;font-size:12px;font-weight:400;color:#26303E;letter-spacing:-0.22px;">17.04.2023 14:55</div>
<div class="t" style="left:836.3px;top:782.24px;font-size:12px;font-weight:400;color:#26303E;letter-spacing:-0.22px;">17.04.2023 23:00</div>
<div class="t" style="left:942px;top:782.24px;font-size:12px;font-weight:400;color:#26303E;letter-spacing:-0.22px;">15.0.27661</div>
<div class="t" style="left:1047px;top:782.24px;font-size:12px;font-weight:400;color:#26303E;">Никогда</div>
<div class="t" style="left:1153px;top:782.24px;font-size:12px;font-weight:400;color:#26303E;">1</div>
<div class="t" style="left:1258.5px;top:782.24px;font-size:12px;font-weight:400;color:#26303E;">1.67 ГБ</div>
<svg style="position:absolute;left:531.4px;top:807px" width="14" height="14" viewBox="0 0 14 14"><ellipse cx="7" cy="3.3" rx="5.6" ry="2.4" fill="none" stroke="#2B64C8" stroke-width="1.3"/><path d="M1.4 3.3 V10.7 C1.4 12 4 13.1 7 13.1 C10 13.1 12.6 12 12.6 10.7 V3.3 M1.4 7 C1.4 8.3 4 9.4 7 9.4 C10 9.4 12.6 8.3 12.6 7" fill="none" stroke="#2B64C8" stroke-width="1.3"/></svg>
<div class="t" style="left:551.4px;top:808.24px;font-size:12px;font-weight:400;color:#2B64C8;">DLCSSDB</div>
<svg style="position:absolute;left:624.6px;top:807.6px" width="13" height="13" viewBox="0 0 13 13"><circle cx="6.5" cy="6.5" r="6.3" fill="#8DB52F"/><path d="M3.9 6.7 L5.7 8.4 L9.1 5" fill="none" stroke="#fff" stroke-width="1.5"/></svg>
<div class="t" style="left:644.6px;top:808.24px;font-size:12px;font-weight:400;color:#26303E;">OK</div>
<div class="t" style="left:730.7px;top:808.24px;font-size:12px;font-weight:400;color:#26303E;letter-spacing:-0.22px;">17.04.2023 14:55</div>
<div class="t" style="left:836.3px;top:808.24px;font-size:12px;font-weight:400;color:#26303E;letter-spacing:-0.22px;">17.04.2023 23:00</div>
<div class="t" style="left:942px;top:808.24px;font-size:12px;font-weight:400;color:#26303E;letter-spacing:-0.22px;">15.0.27661</div>
<div class="t" style="left:1047px;top:808.24px;font-size:12px;font-weight:400;color:#26303E;">Никогда</div>
<div class="t" style="left:1153px;top:808.24px;font-size:12px;font-weight:400;color:#26303E;">1</div>
<div class="t" style="left:1258.5px;top:808.24px;font-size:12px;font-weight:400;color:#26303E;">1.67 ГБ</div>
<div style="position:absolute;left:518px;top:827px;width:877px;height:26px;background:#F3F6FB"></div>
<svg style="position:absolute;left:531.4px;top:833px" width="14" height="14" viewBox="0 0 14 14"><ellipse cx="7" cy="3.3" rx="5.6" ry="2.4" fill="none" stroke="#2B64C8" stroke-width="1.3"/><path d="M1.4 3.3 V10.7 C1.4 12 4 13.1 7 13.1 C10 13.1 12.6 12 12.6 10.7 V3.3 M1.4 7 C1.4 8.3 4 9.4 7 9.4 C10 9.4 12.6 8.3 12.6 7" fill="none" stroke="#2B64C8" stroke-width="1.3"/></svg>
<div class="t" style="left:551.4px;top:834.24px;font-size:12px;font-weight:400;color:#2B64C8;">CyberPr...</div>
<svg style="position:absolute;left:624.6px;top:833.6px" width="13" height="13" viewBox="0 0 13 13"><circle cx="6.5" cy="6.5" r="6.3" fill="#8DB52F"/><path d="M3.9 6.7 L5.7 8.4 L9.1 5" fill="none" stroke="#fff" stroke-width="1.5"/></svg>
<div class="t" style="left:644.6px;top:834.24px;font-size:12px;font-weight:400;color:#26303E;">OK</div>
<div class="t" style="left:730.7px;top:834.24px;font-size:12px;font-weight:400;color:#26303E;letter-spacing:-0.22px;">17.04.2023 14:55</div>
<div class="t" style="left:836.3px;top:834.24px;font-size:12px;font-weight:400;color:#26303E;letter-spacing:-0.22px;">17.04.2023 23:00</div>
<div class="t" style="left:942px;top:834.24px;font-size:12px;font-weight:400;color:#26303E;letter-spacing:-0.22px;">15.0.27661</div>
<div class="t" style="left:1047px;top:834.24px;font-size:12px;font-weight:400;color:#26303E;">Никогда</div>
<div class="t" style="left:1153px;top:834.24px;font-size:12px;font-weight:400;color:#26303E;">1</div>
<div class="t" style="left:1258.5px;top:834.24px;font-size:12px;font-weight:400;color:#26303E;">1.67 ГБ</div>
</body></html>
